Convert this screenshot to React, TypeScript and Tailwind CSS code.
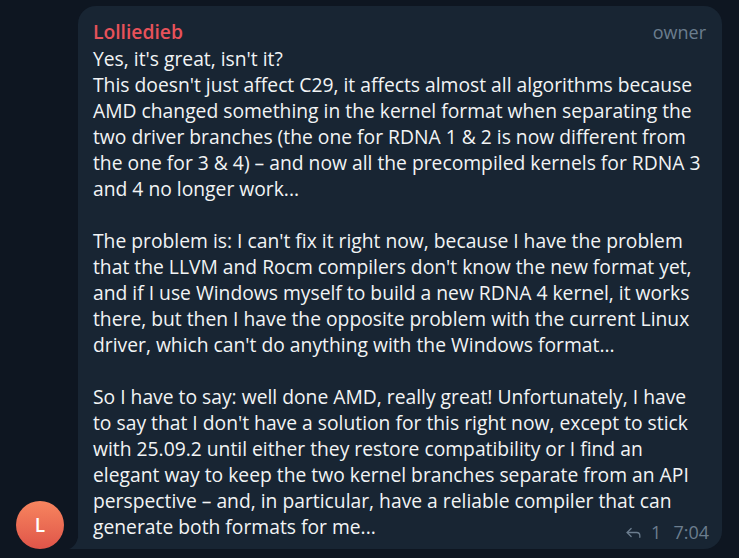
import { Reply } from 'lucide-react';

const paragraphs = [
  "Yes, it's great, isn't it?\nThis doesn't just affect C29, it affects almost all algorithms because AMD changed something in the kernel format when separating the two driver branches (the one for RDNA 1 & 2 is now different from the one for 3 & 4) – and now all the precompiled kernels for RDNA 3 and 4 no longer work...",
  "The problem is: I can't fix it right now, because I have the problem that the LLVM and Rocm compilers don't know the new format yet, and if I use Windows myself to build a new RDNA 4 kernel, it works there, but then I have the opposite problem with the current Linux driver, which can't do anything with the Windows format...",
  "So I have to say: well done AMD, really great! Unfortunately, I have to say that I don't have a solution for this right now, except to stick with 25.09.2 until either they restore compatibility or I find an elegant way to keep the two kernel branches separate from an API perspective – and, in particular, have a reliable compiler that can generate both formats for me...",
];

export default function App() {
  return (
    <div className="w-[739px] h-[558px] bg-[#0e1621] overflow-hidden font-['Open_Sans',sans-serif]">
      <div className="flex items-end pl-4 pt-[6px] gap-[14px]">
        <div className="w-12 h-12 rounded-full bg-gradient-to-b from-[#f7855f] to-[#df5449] flex items-center justify-center text-white text-[19px] font-semibold shrink-0">
          L
        </div>

        <div className="relative w-[644px] h-[543px] bg-[#182533] rounded-[18px] rounded-bl-none pl-[15px] pr-[14px] pt-[13px]">
          {/* tail */}
          <svg className="absolute -left-[9px] bottom-0" width="10" height="18" viewBox="0 0 10 18">
            <path d="M10 0 V18 H0 C5 16 9 12 10 0 Z" fill="#182533" />
          </svg>

          <div className="flex items-baseline justify-between">
            <span className="text-[19.3px] font-semibold text-[#e7525a] leading-[26px]">Lolliedieb</span>
            <span className="text-[18px] text-[#6b7d8e] leading-[26px] mr-[2px]">owner</span>
          </div>

          <div className="text-[19.3px] leading-[26px] text-[#f2f4f5] whitespace-pre-line mt-[1px]">
            {paragraphs.map((p, i) => (
              <p key={i} className={i > 0 ? 'mt-[26px]' : ''}>
                {p}
                {i === paragraphs.length - 1 && (
                  <span className="float-right relative top-[5px] -mr-[1px] flex items-center gap-[8px] text-[#6b7d8e] text-[18px] leading-[26px]">
                    <Reply size={19} strokeWidth={1.6} />
                    <span>1</span>
                    <span className="ml-[4px]">7:04</span>
                  </span>
                )}
              </p>
            ))}
          </div>
        </div>
      </div>
    </div>
  );
}
